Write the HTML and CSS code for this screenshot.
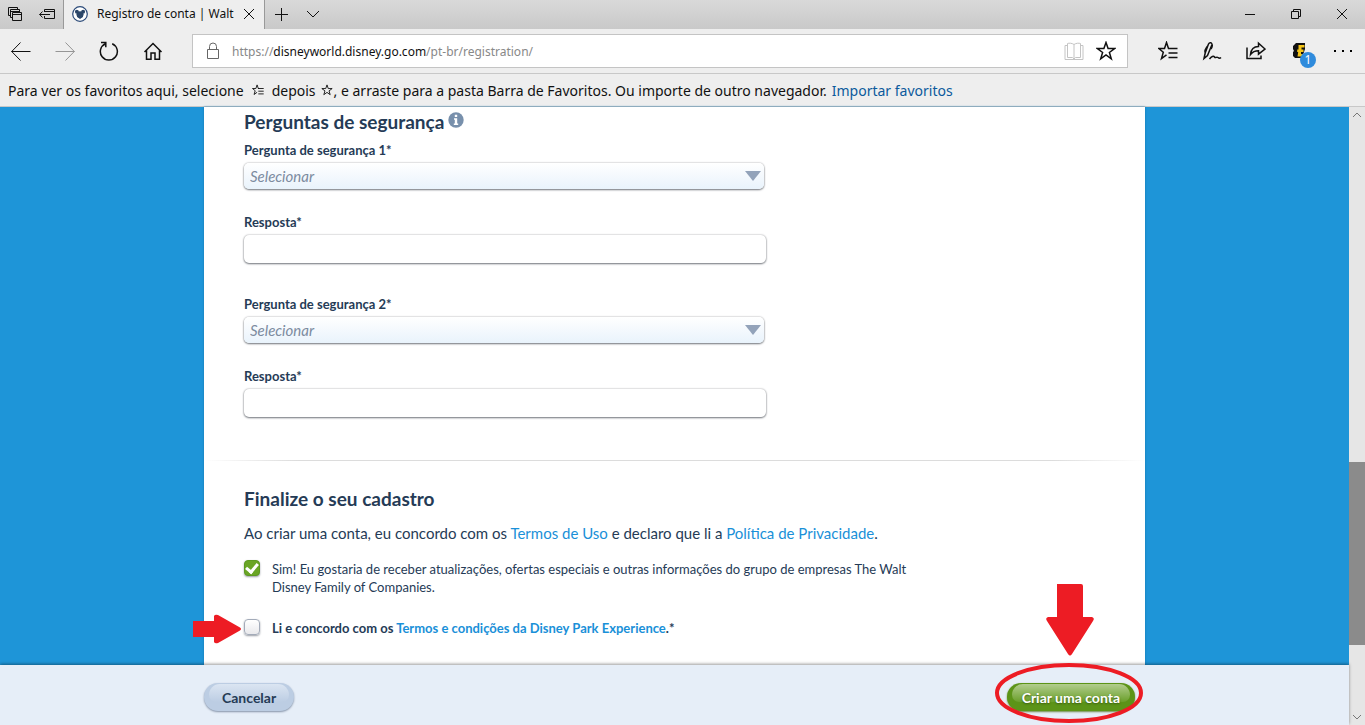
FILE: index.html
```
<!DOCTYPE html>
<html lang="pt-br">
<head>
<meta charset="utf-8">
<title>Registro de conta | Walt Disney World</title>
<link rel="stylesheet" href="styles.css">
</head>
<body>
<svg class="defs" aria-hidden="true">
  <symbol id="fav-list" viewBox="0 0 20 20"><path d="M12 7.500H10.500L8.500 1.500 6.500 7.500H.8L5.300 11.200 3.500 17.500 8.500 13.800M10 7.500H19.500M10.500 12H19.500M10.500 16.500H19.500"/></symbol>
  <symbol id="star" viewBox="0 0 20 20"><path d="M10 1.500 12.100 7.600H18.600L13.400 11.500 15.300 17.800 10 14 4.700 17.800 6.600 11.500 1.400 7.600H7.900Z"/></symbol>
</svg>
<header class="chrome">
  <div class="titlebar">
    <div class="tab-tools">
      <button aria-label="Guias reservadas"><svg class="icon" width="16" height="16" viewBox="0 0 16 16"><path d="M5.500 6.500H14.500V14.500H5.500ZM5.500 8.500H14.500M5 11.500H3.500V3.500H12.500V6M3.500 5.500H12.500M3 9.500H1.500V1.500H10.500V3"/></svg></button>
      <button aria-label="Reservar guias"><svg class="icon" width="16" height="16" viewBox="0 0 16 16"><path d="M5.500 6V3.500H15.500V12.500H5.500V10M5.500 5.500H15.500M.5 8.500H11M3.500 5.500.7 8.500 3.500 11.500"/></svg></button>
    </div>
    <div class="tab">
      <svg class="favicon" width="16" height="16" viewBox="0 0 16 16"><circle cx="8" cy="8" r="7.300" fill="#fff" stroke="#2b4a78" stroke-width="1.200"/><path d="M4.500 8H11.500L10.800 11 8 13 5.200 11Z" fill="#2b4668"/><circle cx="8" cy="8.500" r="3.300" fill="#2b4668"/><circle cx="4.900" cy="5.800" r="2" fill="#2b4668"/><circle cx="11.100" cy="5.800" r="2" fill="#2b4668"/></svg>
      <span class="tab-title">Registro de conta | Walt</span>
      <button aria-label="Fechar guia"><svg class="icon" width="12" height="12" viewBox="0 0 12 12"><path d="M1 1 11 11M11 1 1 11"/></svg></button>
    </div>
    <div class="tab-new">
      <button aria-label="Nova guia"><svg class="icon" width="14" height="14" viewBox="0 0 14 14"><path d="M7.500 1V14M1 7.500H14"/></svg></button>
      <button aria-label="Visualizar guias"><svg class="icon" width="14" height="14" viewBox="0 0 14 14"><path d="M1 4 7 10 13 4"/></svg></button>
    </div>
    <div class="window-tools">
      <button aria-label="Minimizar"><svg class="icon" width="10" height="10" viewBox="0 0 10 10"><path d="M0 5.500H10"/></svg></button>
      <button aria-label="Restaurar"><svg class="icon" width="10" height="10" viewBox="0 0 10 10"><path d="M.5 2.500H7.500V9.500H.5ZM2.500 2.500V.5H9.500V7.500H7.500"/></svg></button>
      <button aria-label="Fechar"><svg class="icon" width="10" height="10" viewBox="0 0 10 10"><path d="M0 0 10 10M10 0 0 10"/></svg></button>
    </div>
  </div>
  <div class="toolbar">
    <div class="nav">
      <button aria-label="Voltar"><svg class="icon" width="20" height="20" viewBox="0 0 20 20"><path d="M.5 10.500H19.500M9.500 1.500.7 10.500 9.500 19.500"/></svg></button>
      <button class="off" aria-label="Avançar"><svg class="icon" width="20" height="20" viewBox="0 0 20 20"><path d="M.5 10.500H19.500M10.500 1.500 19.300 10.500 10.500 19.500"/></svg></button>
      <button aria-label="Atualizar"><svg class="icon heavy" width="20" height="20" viewBox="0 0 20 20"><path d="M13.200 2.700A8.500 8.500 0 1 1 6.500 2.700M2 1.500H6.800V6.300"/></svg></button>
      <button aria-label="Página inicial"><svg class="icon heavy" width="20" height="20" viewBox="0 0 20 20"><path d="M1.500 11 10 2.500 18.500 11M3.500 9.500V18.300H8V12H12V18.300H16.500V9.500"/></svg></button>
    </div>
    <div class="address">
      <svg class="icon lock" width="14" height="18" viewBox="0 0 14 18"><path d="M1.500 7.500H12.500V16.500H1.500ZM3.500 7.500V4.500A3.500 3.500 0 0 1 10.500 4.500V7.500"/></svg>
      <span class="url">https://<b>disneyworld.disney.go.com</b>/pt-br/registration/</span>
      <button aria-label="Modo de leitura"><svg class="icon pale" width="20" height="20" viewBox="0 0 20 20"><path d="M10 3.500C8 2 5 2 3.500 2.500V16.500H8.500L10 18 11.500 16.500H16.500V2.500C15 2 12 2 10 3.500V17M3.500 4.500H1V18.500H19V4.500H16.500"/></svg></button>
      <button aria-label="Adicionar aos favoritos"><svg class="icon heavy" width="20" height="20"><use href="#star"/></svg></button>
    </div>
    <div class="actions">
      <button aria-label="Hub"><svg class="icon heavy" width="20" height="20"><use href="#fav-list"/></svg></button>
      <button aria-label="Anotações"><svg class="icon heavy" width="20" height="20" viewBox="0 0 20 20"><path d="M2 17.500 3.200 12 6.500 3C7.500 1 10.500 1.500 9.800 4L5.500 14.500 2 17.500ZM6 4.500C3 8 2.800 11 3.200 12M9 8C10.500 5.500 10.500 3.500 9.500 2.500M7.500 18C9.500 15.500 11.500 14.500 12.500 16 13.500 17.500 14.500 15.500 16 16.500 17 17.500 18 17.500 19 16.500"/></svg></button>
      <button aria-label="Compartilhar"><svg class="icon heavy" width="20" height="20" viewBox="0 0 20 20"><path d="M1 6.500V17.500H15V14.500M4.500 13.500C5 8.500 7.500 5.500 12.500 5.500V2.200L19 8 12.500 13.200V9.800C9 9.800 6.500 11 4.500 13.500Z"/></svg></button>
      <button class="ext" aria-label="Extensão, 1 aviso"><svg width="20" height="20" viewBox="0 0 20 20"><path d="M6 2H15V8L12 17H5L3 15V11L4 10 3 8V5Z" fill="#111"/><path d="M8.500 4H14.500V6.500H11.500V8.500H13.500V11H11V13H13.500V15.500H7.500L8.200 11H7.200V8.500H8.500Z" fill="#f5c518"/></svg><span class="badge">1</span></button>
      <button aria-label="Mais"><svg width="18" height="20" viewBox="0 0 18 20"><path d="M0 9H2V11H0ZM8 9H10V11H8ZM16 9H18V11H16Z"/></svg></button>
    </div>
  </div>
  <div class="favbar">
    <span>Para ver os favoritos aqui, selecione</span>
    <svg class="icon mini wide" width="12" height="12"><use href="#fav-list"/></svg>
    <span>depois</span>
    <svg class="icon mini" width="12" height="12"><use href="#star"/></svg><span>, e arraste para a pasta Barra de Favoritos. Ou importe de outro navegador.</span>
    <a class="import" href="#">Importar favoritos</a>
  </div>
</header>

<div class="viewport">
  <div class="page">
    <main class="sheet-area">
      <form class="sheet" id="cadastro">
        <section class="questions">
          <h2>Perguntas de segurança<svg class="info" width="16" height="16" viewBox="0 0 16 16"><circle cx="8" cy="8" r="7.700" fill="#7890ac"/><path d="M6.800 2.800H9.200V5H6.800ZM6 6.200H9.200V11.500H10.200V13H5.800V11.500H6.800V7.700H6Z" fill="#fff"/></svg></h2>
          <div class="field"><label for="q1">Pergunta de segurança 1*</label>
            <span class="picker"><select id="q1"><option>Selecionar</option></select></span></div>
          <div class="field"><label for="a1">Resposta*</label><input id="a1" type="text"></div>
          <div class="field"><label for="q2">Pergunta de segurança 2*</label>
            <span class="picker"><select id="q2"><option>Selecionar</option></select></span></div>
          <div class="field"><label for="a2">Resposta*</label><input id="a2" type="text"></div>
        </section>
        <section class="finish">
          <h2>Finalize o seu cadastro</h2>
          <p>Ao criar uma conta, eu concordo com os <a href="#">Termos de Uso</a> e declaro que li a <a href="#">Política de Privacidade</a>.</p>
          <div class="check">
            <input id="news" type="checkbox" checked>
            <label for="news">Sim! Eu gostaria de receber atualizações, ofertas especiais e outras informações do grupo de empresas The Walt Disney Family of Companies.</label>
          </div>
          <div class="check required">
            <input id="terms" type="checkbox">
            <label for="terms">Li e concordo com os <a href="#">Termos e condições da Disney Park Experience</a>.*</label>
            <svg class="arrow-right" width="50" height="30" viewBox="0 0 50 30"><path d="M1 7H22V2Q23 0 26 1L48 13.500Q50 15 48 16.500L26 29Q23 30 22 28V23H1Z"/></svg>
          </div>
        </section>
      </form>
    </main>
    <footer class="bar">
      <div class="bar-inner">
        <button class="pill cancel" type="button">Cancelar</button>
        <div class="submit">
          <button class="pill create" type="submit" form="cadastro">Criar uma conta</button>
          <svg class="callout" width="150" height="142" viewBox="0 0 150 142"><path d="M64 1H88Q90 1 90 3V34H99Q102 35 100 38L79 71Q77 74 75 71L54 38Q52 35 55 34H64Z"/><ellipse cx="76" cy="110" rx="72" ry="28"/></svg>
        </div>
      </div>
    </footer>
  </div>
  <div class="scroll" aria-hidden="true">
    <svg class="icon" width="10" height="16" viewBox="0 0 10 16"><path d="M1 10 5 6 9 10"/></svg>
    <div class="track"><div class="thumb"></div></div>
    <svg class="icon" width="10" height="16" viewBox="0 0 10 16"><path d="M1 6 5 10 9 6"/></svg>
  </div>
</div>
</body>
</html>
```
FILE: styles.css
```
* { box-sizing: border-box; }
body {
  margin: 0;
  height: 100vh;
  display: flex;
  flex-direction: column;
  overflow: hidden;
  font-family: Lato, sans-serif;
  color: #253b56;
}
h2, p { margin: 0; }
a { color: #1a90d8; text-decoration: none; }
button { border: 0; padding: 0; background: none; font: inherit; color: inherit; }
svg { display: block; flex: none; }
.defs { position: absolute; width: 0; height: 0; }
.icon { fill: none; stroke: #111; stroke-width: 1; }
.icon.heavy { stroke-width: 1.5; }
.icon.pale { stroke: #c4c4c4; }
.icon.lock { stroke: #666; }

.chrome { flex: none; font-family: "Noto Sans", sans-serif; color: #111; background: #eee; }
.chrome button { display: grid; place-items: center; }
.titlebar { display: flex; height: 29px; background: linear-gradient(#d9d9d9, #c9c9c9); }
.tab-tools { display: flex; align-items: center; gap: 16px; width: 64px; padding: 0 0 2px 7px; border-right: 1px solid #999; }
.tab { display: flex; align-items: center; width: 201px; padding: 0 10px 2px 8px; background: #eee; border-right: 1px solid #999; font-size: 12px; }
.tab-title { flex: 1; margin: 0 9px; white-space: nowrap; }
.tab-new { display: flex; align-items: center; gap: 18px; padding: 0 0 2px 9px; }
.window-tools { display: flex; align-items: center; gap: 36px; margin-left: auto; padding: 0 18px 2px 0; }

.toolbar { display: flex; align-items: center; height: 45px; border-bottom: 1px solid #c8c8c8; }
.nav { display: flex; gap: 24px; padding: 0 29px 0 11px; }
.off { opacity: .4; }
.address { flex: 1; display: flex; align-items: center; height: 34px; padding: 0 11px 0 13px; background: #fff; border: 1px solid #c4c4c4; }
.url { flex: 1; margin-left: 12px; font-size: 12px; color: #888; }
.url b { font-weight: 400; color: #111; }
.address button + button { margin-left: 12px; }
.actions { display: flex; gap: 24px; padding: 0 13px 0 30px; }
.ext { position: relative; }
.badge { position: absolute; left: 10px; top: 11px; width: 16px; height: 16px; border-radius: 50%; background: #2f8bdc; color: #fff; font-size: 12px; line-height: 16px; text-align: center; }

.favbar { display: flex; align-items: center; height: 33px; padding: 0 8px; border-bottom: 1px solid #c8c8c8; font-size: 14px; white-space: nowrap; }
.mini { margin: 0 1px 0 5px; stroke-width: 1.5; }
.mini.wide { margin: 0 8px; }
.import { margin-left: 5px; color: #0b5a9c; }

.viewport { flex: 1; display: flex; min-height: 0; }
.page { flex: 1; display: flex; flex-direction: column; min-width: 0; }
.sheet-area { flex: 1; min-height: 0; background: #1e95d8; }
.sheet { max-width: 941px; height: 100%; margin: 0 auto; background: #fff; box-shadow: 0 0 2px #1673ab; }
h2 { display: flex; font-size: 19px; line-height: 24px; font-weight: 700; }
.info { margin: 2px 0 0 4px; }

.questions { padding: 3px 40px 43px; }
.field { margin-top: 25px; }
h2 + .field { margin-top: 8px; }
.field:nth-of-type(3) { margin-top: 33px; }
.field label { display: block; margin-bottom: 5px; font-size: 13px; line-height: 16px; font-weight: 700; }
.field input, .field select {
  display: block;
  width: 100%;
  border: 0;
  border-radius: 5px;
  background: #fff;
  box-shadow: 0 1px 2px #777b82, 0 0 2px #aaa;
  font: inherit;
}
.field input { max-width: 522px; height: 28px; padding: 0 6px; }
.picker { display: block; position: relative; max-width: 520px; }
.field select { appearance: none; height: 26px; padding: 0 6px; background: linear-gradient(#fff, #e9f3fc); font-size: 15px; font-style: italic; color: #7c8ba0; }
.picker::after { content: ""; position: absolute; right: 3px; top: 8px; border: 8px solid transparent; border-top: 10px solid #93a3ba; border-bottom: 0; }

.finish { padding: 27px 40px 0; background: linear-gradient(90deg, #fff, #dcdcdc 10%, #dcdcdc 90%, #fff) top / 100% 1px no-repeat; }
.finish p { margin: 12px 0 17px; font-size: 15px; line-height: 20px; }
.check { position: relative; display: flex; gap: 12px; max-width: 668px; font-size: 13px; line-height: 18px; }
.required { margin-top: 23px; font-weight: 700; }
.check input { appearance: none; flex: none; display: grid; place-items: center; width: 16px; height: 16px; margin: 0; border: 1px solid #a3abb9; border-radius: 4px; background: linear-gradient(#fff, #e9e9ec); box-shadow: 0 1px 2px #9a9ea6; }
.check input:checked { border-color: #5d9a20; background: #6aa525; }
.check input:checked::after { content: ""; width: 5px; height: 9px; margin-bottom: 2px; border: solid #fff; border-width: 0 3px 3px 0; transform: rotate(40deg); }
.arrow-right { position: absolute; left: -52px; top: -5px; fill: #ed1c24; }

.bar { position: relative; flex: none; padding: 18px 0 14px; background: #e6eef8; box-shadow: 0 -1px 3px rgba(0, 0, 0, .4); }
.bar-inner { display: flex; justify-content: space-between; max-width: 941px; margin: 0 auto; padding-right: 10px; }
.pill { position: relative; z-index: 0; height: 28px; padding: 0 18px; border-radius: 14px; font-size: 14px; font-weight: 700; }
.pill::before { content: ""; position: absolute; z-index: -1; inset: 1px 5px 9px; border-radius: 12px 12px 8px 8px; }
.cancel { background: #bccde3; box-shadow: 0 1px 2px #8492a8; }
.cancel::before { background: linear-gradient(#dbe5f2, #bccde3); }
.create { padding: 0 15px; background: #5c9418; color: #fff; box-shadow: 0 1px 2px #6c8a45; text-shadow: 0 1px 2px #3a5c10; }
.create::before { background: linear-gradient(#b2cd8e, #6a9f2a); }
.submit { position: relative; }
.callout { position: absolute; left: -14px; bottom: -14px; pointer-events: none; fill: #ed1c24; }
.callout ellipse { fill: none; stroke: #ed1c24; stroke-width: 4; }

.scroll { flex: none; display: flex; flex-direction: column; align-items: center; width: 16px; background: #e6e6e6; }
.scroll .icon { stroke: #777; }
.track { flex: 1; width: 100%; display: flex; flex-direction: column; justify-content: flex-end; padding-bottom: 64px; }
.thumb { height: 35%; background: #8b8b8b; }
```
